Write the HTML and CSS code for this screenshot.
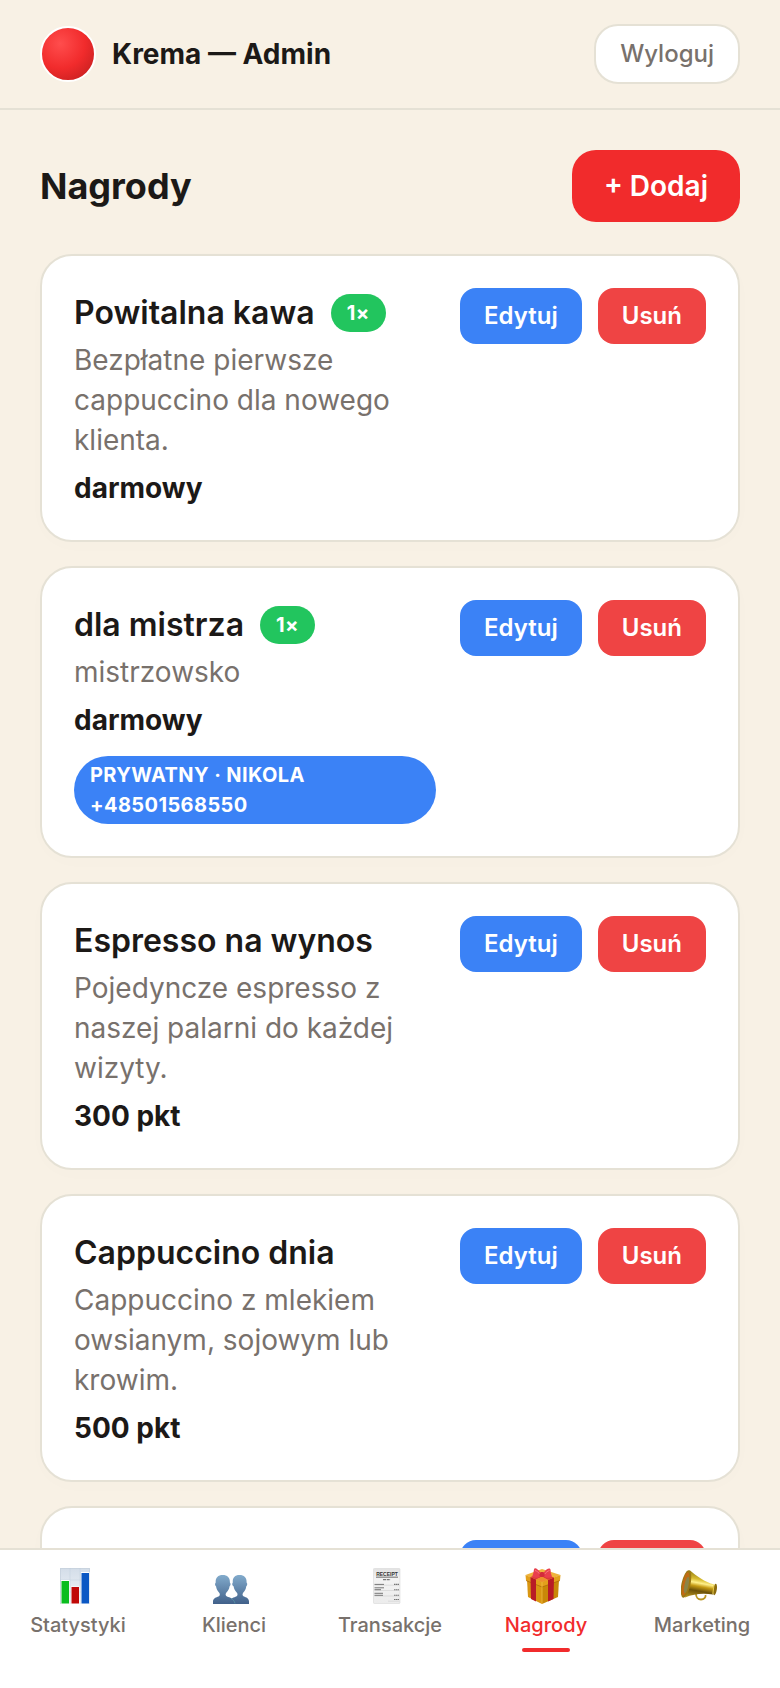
FILE: index.html
```html
<!DOCTYPE html>
<html lang="pl">
<head>
  <meta charset="UTF-8" />
  <meta name="viewport" content="width=device-width, initial-scale=1.0"/>
  <title>Krema — Admin</title>
  <link rel="stylesheet" href="styles.css">
</head>
<body>
  <header class="topbar">
    <div class="brand">
      <span class="logo"></span>
      <span class="brand-name">Krema — Admin</span>
    </div>
    <button class="logout" type="button">Wyloguj</button>
  </header>

  <main>
    <div class="section-head">
      <h1>Nagrody</h1>
      <button class="add-btn" type="button">+ Dodaj</button>
    </div>

    <div class="rewards">
      <article class="card">
        <div class="info">
          <h2>Powitalna kawa <span class="badge">1×</span></h2>
          <p class="desc">Bezpłatne pierwsze cappuccino dla nowego klienta.</p>
          <p class="price">darmowy</p>
        </div>
        <div class="actions">
          <button class="edit" type="button">Edytuj</button>
          <button class="delete" type="button">Usuń</button>
        </div>
      </article>

      <article class="card">
        <div class="info">
          <h2>dla mistrza <span class="badge">1×</span></h2>
          <p class="desc">mistrzowsko</p>
          <p class="price">darmowy</p>
          <p class="private">Prywatny · Nikola +48501568550</p>
        </div>
        <div class="actions">
          <button class="edit" type="button">Edytuj</button>
          <button class="delete" type="button">Usuń</button>
        </div>
      </article>

      <article class="card">
        <div class="info">
          <h2>Espresso na wynos</h2>
          <p class="desc">Pojedyncze espresso z naszej palarni do każdej wizyty.</p>
          <p class="price">300 pkt</p>
        </div>
        <div class="actions">
          <button class="edit" type="button">Edytuj</button>
          <button class="delete" type="button">Usuń</button>
        </div>
      </article>

      <article class="card">
        <div class="info">
          <h2>Cappuccino dnia</h2>
          <p class="desc">Cappuccino z mlekiem owsianym, sojowym lub krowim.</p>
          <p class="price">500 pkt</p>
        </div>
        <div class="actions">
          <button class="edit" type="button">Edytuj</button>
          <button class="delete" type="button">Usuń</button>
        </div>
      </article>

      <article class="card">
        <div class="info"></div>
        <div class="actions">
          <button class="edit" type="button">Edytuj</button>
          <button class="delete" type="button">Usuń</button>
        </div>
      </article>
    </div>
  </main>

  <!-- Bottom navigation -->
  <nav class="tabs">
    <a href="#statystyki">
      <svg viewBox="0 0 36 36" aria-hidden="true">
        <defs>
          <linearGradient id="paper" x1="0" y1="0" x2="0" y2="1">
            <stop offset="0" stop-color="#d3dde8"/>
            <stop offset="1" stop-color="#f4f7fa"/>
          </linearGradient>
        </defs>
        <rect x="3" y="0" width="30" height="36" fill="url(#paper)"/>
        <path d="M3 .5h30M3.500 0v36M32.500 0v36" stroke="#c5d0dc" stroke-width="1" opacity=".7"/>
        <path d="M3 12h30M3 24h30M13 0v36M23 0v36" stroke="#bccbdb" stroke-width=".4"/>
        <path d="M4 12h8.500v24H4zM14 18.500h8.500V36H14zM24 4h8.500v32H24z" fill="#fff"/>
        <rect x="4.500" y="13" width="7.500" height="22.500" fill="#0bbd20"/>
        <rect x="14.500" y="19" width="7.500" height="16.500" fill="#c00808"/>
        <rect x="24.500" y="5" width="7.500" height="30.500" fill="#0b58c4"/>
      </svg>
      <span>Statystyki</span>
    </a>
    <a href="#klienci">
      <svg viewBox="0 0 36 36" aria-hidden="true">
        <defs>
          <linearGradient id="people" x1="0" y1="7" x2="0" y2="36" gradientUnits="userSpaceOnUse">
            <stop offset="0" stop-color="#82abcc"/>
            <stop offset="1" stop-color="#41618a"/>
          </linearGradient>
        </defs>
        <g fill="url(#people)">
          <path d="M17 36v-2.500c0-3.500 4.500-4 6.200-5 1.700-.8 1.700-2.700.5-4-1.800-2-2.900-4-3-6-1.800-1-1.800-3-.9-4C19.300 9.500 22 7 26.500 7s7.500 2.500 7.100 7.500c1.100 1 .7 3-.4 4-.2 2.500-1.300 4.200-2.900 6-1.200 1.500-1 3.200.6 4 2.200 1 5.100 1.500 5.100 5V36z"/>
          <path d="M0 36v-2.500c0-3.500 3.400-4 5.500-5 1.700-.8 1.700-2.700.5-4-1.800-2-2.700-4-2.900-6-1.300-1-1.400-3-.4-4C2.300 9.500 5.200 7 9.700 7s7.500 2.500 7.200 7.500c1.100 1 .8 3-.4 4-.2 2.500-1.500 4.200-3.100 6-1.200 1.500-1.100 3.200.6 4 2.800 1.200 7 1.500 7.500 7.500z"/>
        </g>
        <path d="M18 30.500c2 1 3.500 2.500 4 5" fill="none" stroke="#5b9cab" stroke-width=".7"/>
      </svg>
      <span>Klienci</span>
    </a>
    <a href="#transakcje">
      <svg viewBox="0 0 36 36" aria-hidden="true">
        <defs>
          <linearGradient id="receipt" x1="0" y1="0" x2="0" y2="1">
            <stop offset="0" stop-color="#e2e2e2"/>
            <stop offset=".3" stop-color="#f3f3f3"/>
            <stop offset="1" stop-color="#ececec"/>
          </linearGradient>
        </defs>
        <rect x="4.500" y=".5" width="26.500" height="35" rx=".8" fill="url(#receipt)" stroke="#d8d8d8" stroke-width=".6"/>
        <text class="receipt-title" x="18" y="7.500">RECEIPT</text>
        <path d="M7 9.200h22" stroke="#8a8a8a" stroke-width="1.300"/>
        <path d="M14 11.700h7.500" stroke="#777" stroke-width="1.200" stroke-dasharray="3 .7"/>
        <path d="M5.500 17.200h25M5.500 22.500h25M5.500 28h25M19 33.200h11.500" stroke="#cfcfcf" stroke-width=".6"/>
        <path d="M5.500 16.400H15M5.500 19.800H15M5.500 21.700h6.500M5.500 25.300h8.500M5.500 27.300h8.500" stroke="#777" stroke-width="1"/>
        <path d="M25 16.400h5M25 21.700h5M25 27.200h5M25 31.500h5" stroke="#777" stroke-width="1.100" stroke-dasharray="1.500 .4"/>
      </svg>
      <span>Transakcje</span>
    </a>
    <a href="#nagrody" class="active" aria-current="page">
      <svg viewBox="0 0 36 36" aria-hidden="true">
        <path d="M2 12l15 6v18L3 29z" fill="#d99612"/>
        <path d="M34 12l-17 6v18l16-7z" fill="#c98708"/>
        <path d="M.5 7L17 1l18.500 6L17 15z" fill="#efb33c"/>
        <path d="M.5 7L17 14v5L1 12.500zM35.500 7L17 14v5l18-6.500z" fill="#e3a01c"/>
        <path d="M1 12.500L17 19l18-6.500" fill="none" stroke="#a96605" stroke-width=".7"/>
        <path d="M17 14v22" stroke="#f2c048" stroke-width=".7"/>
        <path d="M5.500 9l5.500 2.500v22L6 31z" fill="#b81b26"/>
        <path d="M29 9.500l-6 2.500v21.500l5.500-2.500z" fill="#b81b26"/>
        <path d="M5.500 9L17 5l12 4.500-6 2.500-6-3-6 2.500z" fill="#dc3a38"/>
        <path d="M11 11.500l6-3 6 3.500-6 2z" fill="#ee8f2c"/>
        <path d="M15.500 5C13 1 10.500-.3 9.500.6 8.400 1.800 9.500 3 7.200 8.500c3 2.400 7 1.300 9-1zM18.500 5C21 1 24 0 25 .8c1.200 1.200 0 3 2 7.700-3 2.400-7 1.300-9-1z" fill="#e93f4d"/>
        <path d="M10 2.500c2 .5 3.500 2 5 3.700M24.500 2.500c-2 .5-3.500 2-5 3.700" stroke="#f87b82" stroke-width="1" fill="none"/>
        <rect x="14.500" y="4" width="5" height="5" rx="1.800" fill="#d32b3b"/>
      </svg>
      <span>Nagrody</span>
    </a>
    <a href="#marketing">
      <svg viewBox="0 0 36 36" aria-hidden="true">
        <defs>
          <linearGradient id="horn" x1="18" y1="3" x2="13" y2="30" gradientUnits="userSpaceOnUse">
            <stop offset="0" stop-color="#8b7410"/>
            <stop offset=".3" stop-color="#d9bd31"/>
            <stop offset=".43" stop-color="#fff08a"/>
            <stop offset=".55" stop-color="#c69b13"/>
            <stop offset=".72" stop-color="#6c5209"/>
            <stop offset="1" stop-color="#b89520"/>
          </linearGradient>
        </defs>
        <path d="M15 26c0 3 2 5.500 5 5.500s5-2 4.500-4.500" fill="none" stroke="#b9951f" stroke-width="1.800"/>
        <path d="M8.500 2c7 6 15 12 25 14.500l-1.500 10c-11-1.500-19-.5-28 3z" fill="url(#horn)"/>
        <ellipse cx="5" cy="16" rx="4.500" ry="14" transform="rotate(12 5 16)" fill="#9a7914"/>
        <ellipse cx="4.500" cy="16" rx="3" ry="12" transform="rotate(12 4.500 16)" fill="#c16a14"/>
        <ellipse cx="5.500" cy="17" rx="2" ry="8.500" transform="rotate(12 5.500 17)" fill="#8b8445"/>
        <ellipse cx="34" cy="21.500" rx="1.800" ry="5.800" transform="rotate(9 34 21.500)" fill="#8c6c0e"/>
        <path d="M33 17l-1.200 9" stroke="#e8cb4b" stroke-width="1"/>
      </svg>
      <span>Marketing</span>
    </a>
  </nav>
</body>
</html>
```

FILE: styles.css
```css
:root {
  --bg: #f8f1e5;
  --card: #fff;
  --border: #e5e1d5;
  --text: #1c1917;
  --muted: #78716c;
  --red: #f12b2c;
  --danger: #ef4444;
  --blue: #3b82f6;
  --green: #22c55e;
}

* {
  box-sizing: border-box;
}

body {
  margin: 0;
  padding-bottom: 140px;
  background-color: var(--bg);
  color: var(--text);
  font-family: Inter, "Liberation Sans", sans-serif;
  font-size: 28px;
  line-height: 40px;
}

h1, h2, p {
  margin: 0;
}

button {
  border: none;
  font-family: inherit;
  cursor: pointer;
}

.topbar {
  display: flex;
  align-items: center;
  justify-content: space-between;
  padding: 24px 40px;
  border-bottom: 2px solid var(--border);
}

.brand {
  display: flex;
  align-items: center;
  gap: 16px;
}

.logo {
  width: 56px;
  height: 56px;
  border: 2px solid #fff;
  border-radius: 50%;
  background: radial-gradient(circle at 35% 30%, #ff4d4d, #f12b2c 50%, #b91c1c);
}

.brand-name {
  font-weight: 700;
}

.logout {
  padding: 12px 24px;
  border: 2px solid var(--border);
  border-radius: 24px;
  background-color: var(--card);
  color: var(--muted);
  font-size: 24px;
  font-weight: 500;
  line-height: 32px;
}

main {
  padding: 40px;
}

.section-head {
  display: flex;
  align-items: center;
  justify-content: space-between;
  margin-bottom: 32px;
}

h1 {
  font-size: 36px;
  font-weight: 700;
}

.add-btn {
  padding: 16px 32px;
  border-radius: 24px;
  background-color: var(--red);
  color: #fff;
  font-size: 28px;
  font-weight: 600;
  line-height: 40px;
}

.rewards {
  display: flex;
  flex-direction: column;
  gap: 24px;
}

.card {
  display: flex;
  align-items: flex-start;
  gap: 24px;
  padding: 32px;
  border: 2px solid var(--border);
  border-radius: 32px;
  background-color: var(--card);
  box-shadow: 0 4px 24px rgba(0, 0, 0, 0.01);
}

.info {
  flex: 1;
}

h2 {
  display: flex;
  align-items: center;
  gap: 16px;
  margin-bottom: 2px;
  font-size: 32px;
  font-weight: 600;
  line-height: 50px;
}

.badge,
.private {
  padding: 4px 16px;
  border-radius: 999px;
  color: #fff;
  font-size: 20px;
  font-weight: 700;
  letter-spacing: 0.02em;
  line-height: 30px;
}

.badge {
  background-color: var(--green);
}

.desc {
  color: var(--muted);
}

.price {
  margin-top: 8px;
  font-weight: 700;
}

.private {
  margin-top: 16px;
  background-color: var(--blue);
  text-transform: uppercase;
}

.actions {
  display: flex;
  gap: 16px;
}

.actions button {
  padding: 12px 24px;
  border-radius: 16px;
  color: #fff;
  font-size: 24px;
  font-weight: 600;
  line-height: 32px;
}

.actions .edit {
  background-color: var(--blue);
}

.actions .delete {
  background-color: var(--danger);
}

.tabs {
  position: fixed;
  left: 0;
  right: 0;
  bottom: 0;
  display: flex;
  padding: 18px 0 36px;
  border-top: 2px solid var(--border);
  background-color: var(--card);
}

.tabs a {
  flex: 1;
  display: flex;
  flex-direction: column;
  align-items: center;
  color: var(--muted);
  font-size: 20px;
  font-weight: 500;
  line-height: 30px;
  text-decoration: none;
}

.tabs svg {
  box-sizing: content-box;
  width: 36px;
  height: 36px;
  margin-bottom: 6px;
  padding-right: 6px;
}

.receipt-title {
  font-family: "Liberation Sans", sans-serif;
  font-size: 5px;
  font-weight: 700;
  text-anchor: middle;
  fill: #333;
}

.tabs a::after {
  content: "";
  width: 48px;
  height: 4px;
  margin-top: 8px;
  border-radius: 2px;
}

.tabs .active {
  color: var(--red);
}

.tabs .active::after {
  background-color: var(--red);
}
```
